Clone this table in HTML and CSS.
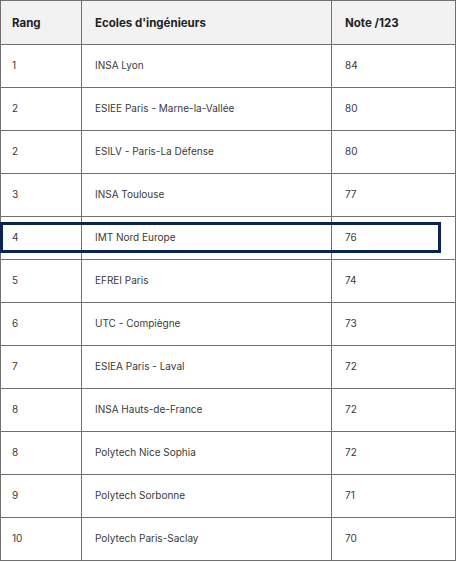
FILE: index.html
```html
<!DOCTYPE html>
<html lang="fr">
<head>
<meta charset="utf-8">
<link rel="stylesheet" href="styles.css">
</head>
<body>
<div class="wrap">
<table class="rank">
<thead>
<tr><th class="c1">Rang</th><th class="c2">Ecoles d'ingénieurs</th><th class="c3">Note /123</th></tr>
</thead>
<tbody>
<tr><td>1</td><td>INSA Lyon</td><td>84</td></tr>
<tr><td>2</td><td>ESIEE Paris - Marne-la-Vallée</td><td>80</td></tr>
<tr><td>2</td><td>ESILV - Paris-La Défense</td><td>80</td></tr>
<tr><td>3</td><td>INSA Toulouse</td><td>77</td></tr>
<tr><td>4</td><td>IMT Nord Europe</td><td>76</td></tr>
<tr><td>5</td><td>EFREI Paris</td><td>74</td></tr>
<tr><td>6</td><td>UTC - Compiègne</td><td>73</td></tr>
<tr><td>7</td><td>ESIEA Paris - Laval</td><td>72</td></tr>
<tr><td>8</td><td>INSA Hauts-de-France</td><td>72</td></tr>
<tr><td>8</td><td>Polytech Nice Sophia</td><td>72</td></tr>
<tr><td>9</td><td>Polytech Sorbonne</td><td>71</td></tr>
<tr><td>10</td><td>Polytech Paris-Saclay</td><td>70</td></tr>
</tbody>
</table>
<div class="highlight"></div>
</div>
</body>
</html>
```
FILE: styles.css
```css
html, body {
  margin: 0;
  padding: 0;
  background: #ffffff;
}
body {
  font-family: Inter, "Liberation Sans", Arial, sans-serif;
  font-size: 10px;
  color: #3a3a3a;
}
.wrap {
  position: relative;
  width: 456px;
}
.rank {
  border-collapse: collapse;
  width: 456px;
  table-layout: fixed;
}
.rank th, .rank td {
  border: 1px solid #707070;
  padding: 0 0 0 13px;
  text-align: left;
  vertical-align: middle;
}
.rank th:first-child, .rank td:first-child {
  padding-left: 11px;
}
.rank th {
  background: #f2f2f2;
  font-weight: 700;
  color: #222222;
  height: 43px;
  font-size: 11.5px;
}
.rank td {
  height: 39px;
  padding-bottom: 3px;
}
.c1 { width: 69px; }
.c2 { width: 236px; }
.highlight {
  position: absolute;
  left: 0;
  top: 222px;
  width: 435px;
  height: 25px;
  border: 3px solid #0b2456;
}
```
